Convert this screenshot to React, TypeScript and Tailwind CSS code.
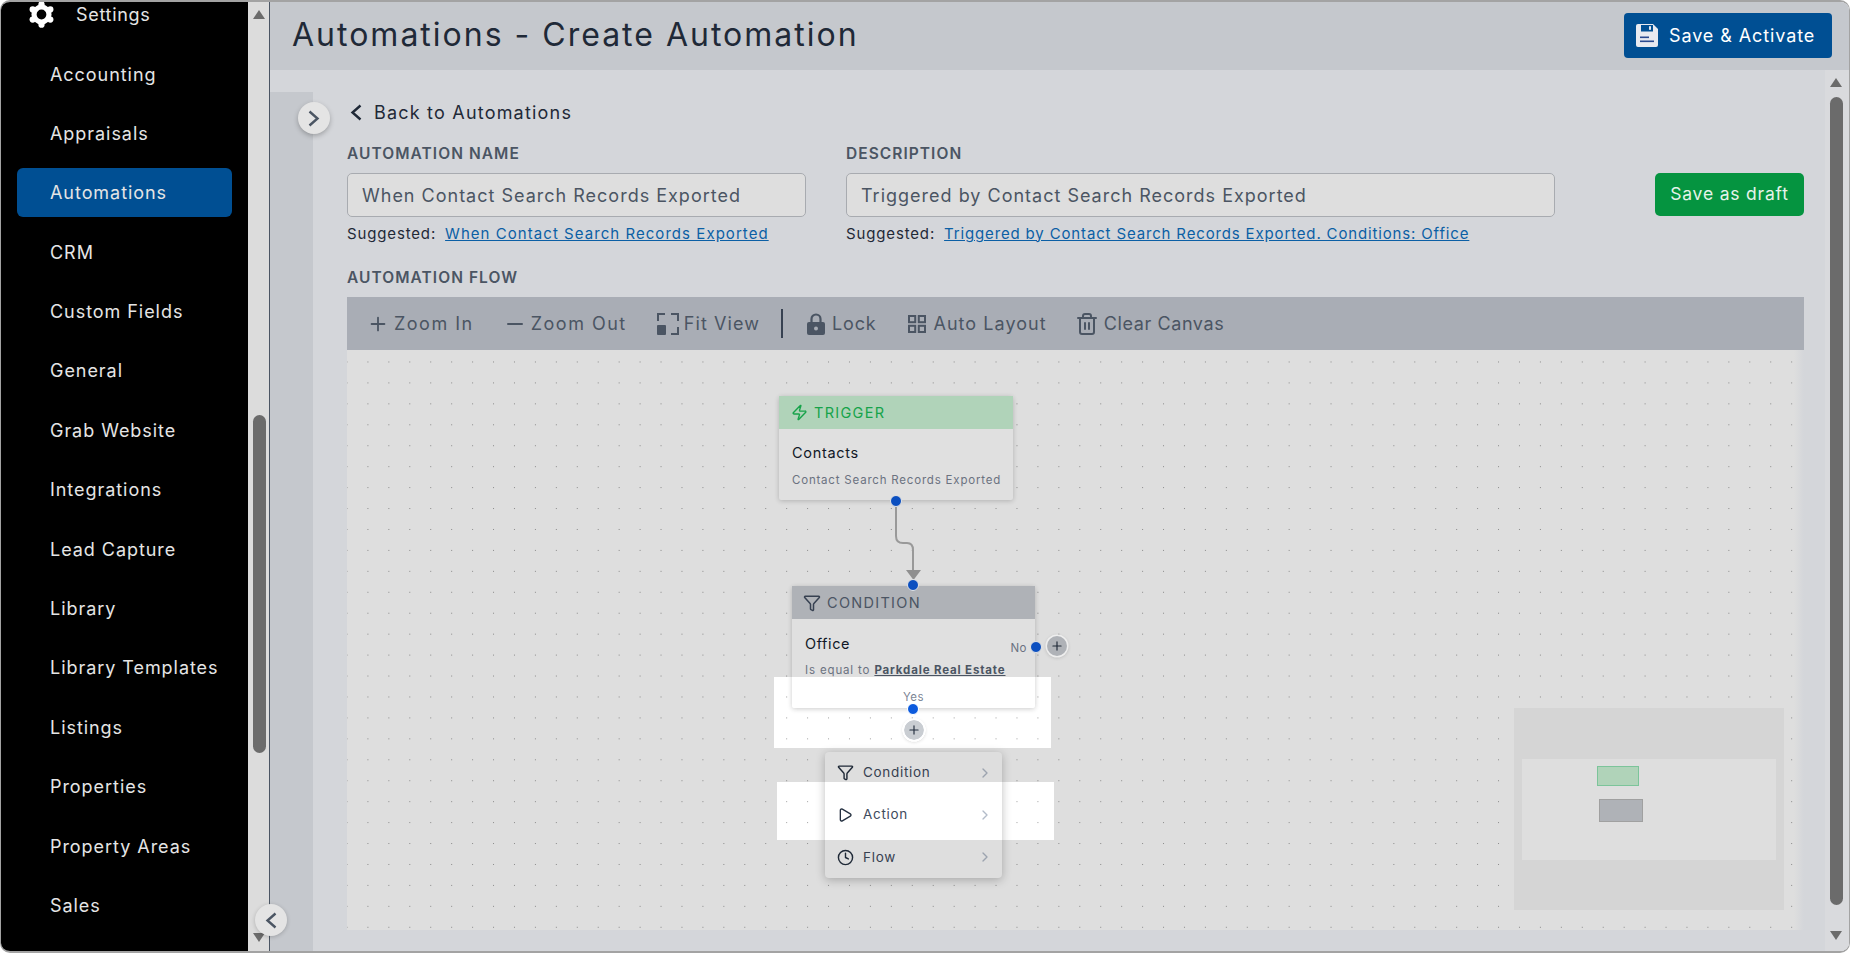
import { ChevronRight, Clock, Funnel, Minus, Play, Plus, Trash2, Zap } from "lucide-react";

const navItems = ["Accounting", "Appraisals", "Automations", "CRM", "Custom Fields", "General", "Grab Website", "Integrations", "Lead Capture", "Library", "Library Templates", "Listings", "Properties", "Property Areas", "Sales"];

const Handle = ({ className }: { className: string }) => (
    <div className={`absolute w-[12px] h-[12px] rounded-full bg-[#0b4fc0] border border-[#e4e4e4] ${className}`} />
);

const AddButton = ({ className }: { className: string }) => (
    <div className={`absolute w-[20px] h-[20px] rounded-full bg-[#afb2b7] flex items-center justify-center shadow-[0_0_0_1.5px_#eee,0_1px_4px_rgba(0,0,0,0.3)] ${className}`}>
        <Plus size={14} className="text-[#1f2937]" />
    </div>
);

const ToolButton = ({ icon, label, className }: { icon: React.ReactNode; label: string; className: string }) => (
    <div className={`flex items-center ${className}`}>
        {icon}
        <span>{label}</span>
    </div>
);

const MenuRow = ({ icon, label }: { icon: React.ReactNode; label: string }) => (
    <div className="h-[42px] flex items-center pl-[12px] pr-[9px] border-b border-[#e8e8e8] last:border-b-0">
        <span className="w-[26px] flex items-center">{icon}</span>
        <span className="flex-1 text-[13.5px] tracking-[0.7px] text-[#374151]">{label}</span>
        <ChevronRight size={16} strokeWidth={2} className="text-[#9ca3af]" />
    </div>
);

const Chevron = ({ left, className }: { left?: boolean; className: string }) => (
    <svg width="12" height="17" viewBox="0 0 12 17" fill="none" stroke="currentColor" strokeWidth="2.4" className={className}>
        <path d={left ? "M10.5 1.5L2.5 8.5L10.5 15.5" : "M1.5 1.5L9.5 8.5L1.5 15.5"} />
    </svg>
);

const Gear = () => (
    <svg width="27" height="27" viewBox="0 0 26 26" className="text-white" fill="currentColor">
        <circle cx="13" cy="13" r="7.2" fill="none" stroke="currentColor" strokeWidth="5" />
        <circle cx="13" cy="3.2" r="3" />
        <circle cx="21.5" cy="8.1" r="3" />
        <circle cx="21.5" cy="17.9" r="3" />
        <circle cx="13" cy="22.8" r="3" />
        <circle cx="4.5" cy="17.9" r="3" />
        <circle cx="4.5" cy="8.1" r="3" />
    </svg>
);

const Floppy = () => (
    <svg width="22" height="23" viewBox="0 0 22 23" className="mr-[11px]">
        <path d="M2 0H17L22 5V21a2 2 0 0 1-2 2H2a2 2 0 0 1-2-2V2a2 2 0 0 1 2-2Z" fill="#e8eaf0" />
        <rect x="5" y="1" width="12" height="6.5" fill="#004f93" />
        <rect x="13" y="2.2" width="2" height="3.6" fill="#e8eaf0" />
        <rect x="4" y="12.5" width="9" height="1.6" fill="#2b4a8f" />
        <rect x="4" y="16.5" width="14" height="1.6" fill="#2b4a8f" />
    </svg>
);

const label = "h-[16px] pt-[2px] flex items-center text-[15.5px] font-semibold tracking-[1.05px] text-[#4b5563] whitespace-nowrap";
const field = "mt-[12px] h-[44px] rounded-[5px] border border-[#a8abb0] bg-[#dedede] flex items-center px-[14px] text-[18px] tracking-[1px] text-[#4b5563] whitespace-nowrap";
const suggested = "mt-[7px] h-[18px] pt-[2px] flex items-center text-[15px] tracking-[0.85px] text-[#1f2937] whitespace-nowrap";

export default function App() {
    return (
        <div className="w-[1850px] h-[953px] bg-white overflow-hidden font-['Inter',sans-serif]">
            <div className="w-full h-full flex rounded-[10px] border-t-2 border-b-2 border-l border-r border-[#a3a3a3] overflow-hidden relative">
                {/* Sidebar */}
                <aside className="w-[247px] bg-black text-[#e5e5e5] shrink-0 -mt-[2px]">
                    <div className="h-[28px] flex items-center pl-[27px]">
                        <Gear />
                        <span className="ml-[21px] text-[18px] tracking-[0.7px]">Settings</span>
                    </div>
                    <nav className="mt-[21.5px] px-[16px] flex flex-col gap-[10.4px]">
                        {navItems.map((item) => (
                            <div key={item} className={`h-[49px] rounded-[6px] pl-[33px] flex items-center text-[18px] tracking-[0.95px] ${item === "Automations" ? "bg-[#004f93]" : ""}`}>
                                {item}
                            </div>
                        ))}
                    </nav>
                </aside>
                <div className="w-[22px] shrink-0 bg-[#dcdcdc] border-r border-[#4b5563] relative -mt-[2px]">
                    <div className="absolute left-[5px] top-[10px] w-0 h-0 border-x-[6px] border-x-transparent border-b-[9px] border-b-[#6b6b6b]" />
                    <div className="absolute left-[5px] top-[415px] w-[13px] h-[338px] rounded-full bg-[#6b6b6b]" />
                    <div className="absolute left-[5px] bottom-[9px] w-0 h-0 border-x-[6px] border-x-transparent border-t-[9px] border-t-[#6b6b6b]" />
                </div>

                {/* Main */}
                <main className="flex-1 flex flex-col bg-[#d4d6da] min-w-0">
                    <header className="h-[68px] bg-[#c5c8cd] flex items-center justify-between pl-[22px] pr-[17px] pb-[2px] shrink-0">
                        <h1 className="text-[32px] tracking-[2px] text-[#1f2937] font-normal whitespace-nowrap">Automations - Create Automation</h1>
                        <button className="w-[208px] h-[45px] bg-[#004f93] rounded-[4px] flex items-center pl-[12px] text-white text-[18px] tracking-[0.9px] whitespace-nowrap">
                            <Floppy />
                            Save &amp; Activate
                        </button>
                    </header>

                    <div className="flex-1 flex min-h-0">
                        <div className="w-[43px] mt-[22px] bg-[#c5c8cd] shrink-0" />
                        <div className="flex-1 pl-[34px] pr-[21px] min-w-0">
                            <div className="h-[26px] mt-[29px] flex items-center text-[18px] tracking-[1.2px] text-[#1f2937]">
                                <Chevron left className="ml-[3px]" />
                                <span className="ml-[12px]">Back to Automations</span>
                            </div>
                            <div className="mt-[20px] flex">
                                <div className="w-[459px]">
                                    <div className={label}>AUTOMATION NAME</div>
                                    <div className={field}>When Contact Search Records Exported</div>
                                    <div className={suggested}>
                                        Suggested:
                                        <span className="ml-[9px] tracking-[1.05px] text-[#0b5fa5] underline">When Contact Search Records Exported</span>
                                    </div>
                                </div>
                                <div className="w-[709px] ml-[40px]">
                                    <div className={label}>DESCRIPTION</div>
                                    <div className={field}>Triggered by Contact Search Records Exported</div>
                                    <div className={suggested}>
                                        Suggested:
                                        <span className="ml-[9px] text-[#0b5fa5] underline">Triggered by Contact Search Records Exported. Conditions: Office</span>
                                    </div>
                                </div>
                                <button className="ml-auto mt-[28px] w-[149px] h-[43px] rounded-[5px] bg-[#059440] text-[#e5f3ea] text-[17.5px] tracking-[0.8px]">Save as draft</button>
                            </div>

                            <div className={`mt-[27px] ${label}`}>AUTOMATION FLOW</div>

                            {/* Toolbar */}
                            <div className="mt-[12px] h-[53px] bg-[#a9adb5] flex items-center pl-[20px] text-[18px] text-[#4b5563] whitespace-nowrap">
                                <ToolButton icon={<Plus size={22} className="mr-[5px]" />} label="Zoom In" className="tracking-[1.5px]" />
                                <ToolButton icon={<Minus size={24} className="mr-[4px]" />} label="Zoom Out" className="ml-[29px] tracking-[1.5px]" />
                                <ToolButton
                                    icon={
                                        <svg width="22" height="22" viewBox="0 0 22 22" className="mr-[5px]" fill="none" stroke="currentColor" strokeWidth="2">
                                            <path d="M1 8V1h7M14 1h7v7M21 14v7h-7" />
                                            <rect x="0" y="12" width="9" height="10" rx="1" fill="currentColor" stroke="none" />
                                        </svg>
                                    }
                                    label="Fit View"
                                    className="ml-[30px] tracking-[1.1px]"
                                />
                                <div className="w-[1.5px] h-[29px] bg-[#374151] ml-[21px]" />
                                <ToolButton
                                    icon={
                                        <svg width="18" height="22" viewBox="0 0 18 22" className="mr-[7px]" fill="currentColor">
                                            <rect x="0" y="9" width="18" height="13" rx="2" />
                                            <path d="M4.5 9V6a4.5 4.5 0 0 1 9 0v3" fill="none" stroke="currentColor" strokeWidth="2.2" />
                                            <circle cx="9" cy="15.5" r="2" fill="#a9adb5" />
                                        </svg>
                                    }
                                    label="Lock"
                                    className="ml-[24.4px] tracking-[0.8px]"
                                />
                                <ToolButton
                                    icon={
                                        <svg width="18" height="18" viewBox="0 0 18 18" className="mr-[7px]" fill="none" stroke="currentColor" strokeWidth="2">
                                            <rect x="1" y="1" width="6.2" height="6.2" />
                                            <rect x="10.8" y="1" width="6.2" height="6.2" />
                                            <rect x="1" y="10.8" width="6.2" height="6.2" />
                                            <rect x="10.8" y="10.8" width="6.2" height="6.2" />
                                        </svg>
                                    }
                                    label="Auto Layout"
                                    className="ml-[32px] tracking-[1.05px]"
                                />
                                <ToolButton icon={<Trash2 size={24} className="mr-[5px]" />} label="Clear Canvas" className="ml-[28px] tracking-[0.6px]" />
                            </div>

                            {/* Canvas */}
                            <div className="relative h-[580px] bg-[#dedede] bg-[radial-gradient(#8a8a8a_0.8px,transparent_0.9px)] bg-[size:20.95px_20.95px] bg-[position:-10.5px_1.5px] overflow-hidden">
                                <div className="absolute right-0 top-0 bottom-0 w-[10px] bg-gradient-to-r from-transparent to-[#d4d6da]" />

                                {/* edge */}
                                <svg className="absolute left-[540px] top-[150px]" width="40" height="100" viewBox="0 0 40 100" fill="none">
                                    <path d="M9 5V36Q9 43 16 43H20Q26 43 26 50V72" stroke="#999" strokeWidth="2" />
                                    <path d="M19 70H34L26.5 80Z" fill="#8f8f8f" />
                                </svg>

                                {/* Trigger node */}
                                <div className="absolute left-[432px] top-[46px] w-[234px] h-[104px] bg-[#e0e0e0] shadow-[0_1px_5px_rgba(0,0,0,0.2)] rounded-[2px]">
                                    <div className="h-[33px] bg-[#b0d3b9] flex items-center pl-[12px] text-[14.5px] tracking-[1.3px] text-[#16a34a]">
                                        <Zap size={17} className="mr-[6px]" />
                                        TRIGGER
                                    </div>
                                    <div className="pl-[13px] mt-[15px] text-[14.5px] leading-[18px] tracking-[0.7px] text-[#111827]">Contacts</div>
                                    <div className="pl-[13px] mt-[10px] text-[11.5px] leading-[16px] tracking-[0.8px] text-[#6b7280] whitespace-nowrap">Contact Search Records Exported</div>
                                </div>
                                <Handle className="left-[543px] top-[145px]" />

                                {/* Condition node */}
                                <div className="absolute left-[445px] top-[236px] w-[243px] h-[122px] bg-[#e0e0e0] shadow-[0_1px_5px_rgba(0,0,0,0.2)] rounded-[2px]">
                                    <div className="h-[33px] bg-[#afb2b7] flex items-center pl-[11px] text-[14.5px] tracking-[1.3px] text-[#4b5563]">
                                        <Funnel size={18} className="mr-[6px] text-[#374151]" />
                                        CONDITION
                                    </div>
                                    <div className="pl-[13px] mt-[16px] text-[14.5px] leading-[18px] tracking-[0.6px] text-[#111827]">Office</div>
                                    <div className="pl-[13px] mt-[9px] text-[11.5px] leading-[16px] tracking-[0.85px] text-[#6b7280] whitespace-nowrap">
                                        Is equal to <span className="font-bold text-[#4b5563] underline">Parkdale Real Estate</span>
                                    </div>
                                    <div className="absolute left-0 right-0 top-[103px] text-center text-[11.5px] leading-[16px] tracking-[0.5px] text-[#6b7280]">Yes</div>
                                    <div className="absolute right-[8px] top-[54px] text-[11.5px] leading-[16px] tracking-[0.5px] text-[#6b7280]">No</div>
                                </div>
                                <Handle className="left-[560px] top-[229px]" />
                                <Handle className="left-[683px] top-[291px]" />
                                <Handle className="left-[560px] top-[353px]" />
                                <AddButton className="left-[700px] top-[286px]" />
                                <AddButton className="left-[557px] top-[370px]" />

                                {/* Add menu */}
                                <div className="absolute left-[478px] top-[402px] w-[177px] bg-[#dedede] rounded-[4px] shadow-[0_2px_10px_rgba(0,0,0,0.25)]">
                                    <MenuRow icon={<Funnel size={17} className="text-[#1f2937]" />} label="Condition" />
                                    <MenuRow icon={<Play size={16} className="text-[#1f2937]" />} label="Action" />
                                    <MenuRow icon={<Clock size={17} className="text-[#1f2937]" />} label="Flow" />
                                </div>

                                {/* Minimap */}
                                <div className="absolute left-[1167px] top-[358px] w-[270px] h-[202px] bg-[#d5d5d5]">
                                    <div className="absolute left-[8px] top-[51px] w-[254px] h-[101px] bg-[#dedede]" />
                                    <div className="absolute left-[83px] top-[58px] w-[42px] h-[20px] bg-[#b0d3b9] border border-[#7cc49a]" />
                                    <div className="absolute left-[85px] top-[91px] w-[44px] h-[23px] bg-[#afb2b7] border border-[#a0a0a0]" />
                                </div>

                                {/* highlighted bands */}
                                <div className="absolute left-[427px] top-[327px] w-[277px] h-[71px] backdrop-brightness-[1.15]" />
                                <div className="absolute left-[430px] top-[432px] w-[277px] h-[58px] backdrop-brightness-[1.15]" />
                            </div>
                        </div>
                        <div className="w-[24px] shrink-0 bg-[#d9dadd] relative">
                            <div className="absolute left-[5px] top-[8px] w-0 h-0 border-x-[6px] border-x-transparent border-b-[9px] border-b-[#6b6b6b]" />
                            <div className="absolute left-[5px] top-[27px] w-[13px] h-[808px] rounded-full bg-[#6b6b6b]" />
                            <div className="absolute left-[5px] bottom-[11px] w-0 h-0 border-x-[6px] border-x-transparent border-t-[9px] border-t-[#6b6b6b]" />
                        </div>
                    </div>
                </main>

                {/* Floating collapse buttons */}
                <div className="absolute left-[297px] top-[100px] w-[32px] h-[32px] rounded-full bg-[#e4e4e4] shadow-[0_2px_5px_rgba(0,0,0,0.25)] flex items-center justify-center">
                    <Chevron className="text-[#4b5563]" />
                </div>
                <div className="absolute left-[254px] top-[902px] w-[32px] h-[32px] rounded-full bg-[#e4e4e4] shadow-[0_1px_4px_rgba(0,0,0,0.2)] flex items-center justify-center">
                    <Chevron left className="text-[#4b5563]" />
                </div>
            </div>
        </div>
    );
}
